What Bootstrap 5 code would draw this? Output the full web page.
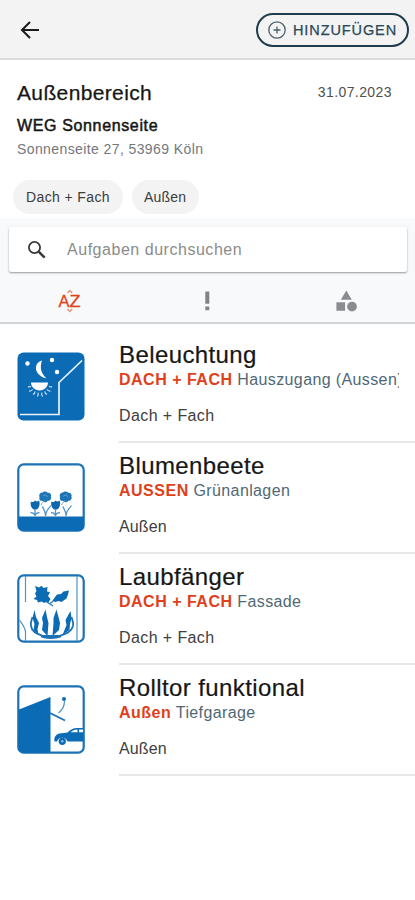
<!DOCTYPE html>
<html lang="de">
<head>
<meta charset="utf-8">
<meta name="viewport" content="width=device-width, initial-scale=1">
<title>Außenbereich</title>
<link href="https://cdn.jsdelivr.net/npm/bootstrap@5.3.0/dist/css/bootstrap.min.css" rel="stylesheet">
<style>
body{font-family:"Liberation Sans",Arial,sans-serif;background:#fff;color:#161616;min-height:900px}
svg{display:block;flex:none}
.topbar{height:60px;background:#f3f3f3;border-bottom:2px solid #dcdcdc;padding:1px 6px 0 18px}
.btn-add{height:34px;width:153px;border:2px solid #1d3c4c;color:#2b4858;font-size:14.5px;letter-spacing:.9px;-webkit-text-stroke:.25px;line-height:1;padding:1px 0 0 9px;gap:6px}
.info{height:158px;padding:20px 12px 0 13px}
.area-title{font-size:21px;letter-spacing:.36px;line-height:26px;-webkit-text-stroke:.25px}
.date{font-size:14px;letter-spacing:.42px;line-height:25px;color:#505050;margin-right:7px}
.weg{font-size:16px;letter-spacing:.64px;line-height:20px;-webkit-text-stroke:.5px;margin-top:10px}
.addr{font-size:14px;letter-spacing:.4px;line-height:18px;color:#74777c;margin-top:4px}
.chips{margin-top:22px;gap:9px}
.chip{height:34px;line-height:34px;background:#f3f3f3;font-size:14px;letter-spacing:.38px;color:#3c3c3c;padding:0 13px}
.chip+.chip{letter-spacing:.2px;padding-left:12px}
.tools{height:106px;background:#f8f9fb;border-bottom:2px solid #d3d4d6;padding-top:9px}
.searchbox{height:45px;margin:0 8px 0 9px;background:#fff;border-radius:2px;box-shadow:0 1px 2px rgba(0,0,0,.4);padding-left:18px;gap:20px}
.searchbox input{font-size:16px;letter-spacing:.53px;color:#333}
.searchbox input::placeholder{color:#8b8b8b;opacity:1}
.sorts{padding-top:17px}
.az{font-size:17px;fill:#e0431c;stroke:#e0431c;stroke-width:.3px}
.tasks{padding:8px 0 0 17px}
.task{height:111px;gap:34px}
.task svg{margin-top:20px}
.task-body{height:111px;border-bottom:2px solid #e8e8e8;padding-top:9px;min-width:0}
.task-name{font-size:24px;letter-spacing:.4px;line-height:28px;-webkit-text-stroke:.2px}
.task-place{font-size:16px;letter-spacing:.38px;line-height:20px;margin-top:1px;width:280px;color:#506875;overflow:hidden;white-space:nowrap}
.task-place b{color:#df3f1b;letter-spacing:.5px}
.task-tag{font-size:16px;letter-spacing:.4px;line-height:20px;margin-top:16px;color:#404040}
.task-tag.short{letter-spacing:.15px}
</style>
</head>
<body>
<header class="topbar d-flex align-items-center justify-content-between">
  <svg width="24" height="24" viewBox="0 0 24 24" fill="none" stroke="#1a1a1a" stroke-width="2"><path d="M21 12H4.500M12 4 4 12l8 8"/></svg>
  <button class="btn btn-add rounded-pill d-flex align-items-center">
    <svg width="20" height="20" viewBox="0 0 20 20" fill="none" stroke="#4b606d" stroke-width="1.300"><circle cx="10" cy="10" r="8.200"/><path d="M10 6.500v7M6.500 10h7"/></svg>
    <span>HINZUFÜGEN</span>
  </button>
</header>

<section class="info">
  <div class="px-1">
    <div class="d-flex justify-content-between">
      <h1 class="area-title m-0">Außenbereich</h1>
      <span class="date">31.07.2023</span>
    </div>
    <div class="weg">WEG Sonnenseite</div>
    <div class="addr">Sonnenseite 27, 53969 Köln</div>
  </div>
  <div class="chips d-flex">
    <span class="chip rounded-pill">Dach + Fach</span>
    <span class="chip rounded-pill">Außen</span>
  </div>
</section>

<section class="tools">
  <div class="searchbox d-flex align-items-center">
    <svg width="20" height="20" viewBox="0 0 20 20" fill="none" stroke="#3a3a3a"><circle cx="7.500" cy="7.500" r="5.600" stroke-width="1.800"/><path d="m11.700 11.700 6 6" stroke-width="2.500"/></svg>
    <input class="form-control border-0 shadow-none bg-transparent p-0" type="text" placeholder="Aufgaben durchsuchen">
  </div>
  <div class="sorts row g-0">
    <div class="col-4 d-flex justify-content-center"><svg width="26" height="24" viewBox="0 0 26 24"><g class="az"><text x="2.500" y="18" textLength="11" lengthAdjust="spacingAndGlyphs">A</text><text x="13.500" y="18" textLength="11" lengthAdjust="spacingAndGlyphs">Z</text></g><path d="m11.500 4 2.300-2.600L16.100 4M11.500 20l2.300 2.600 2.300-2.600" fill="none" stroke="#ea8a70" stroke-width="1.300"/></svg></div>
    <div class="col-4 d-flex justify-content-center"><svg width="24" height="24" viewBox="0 0 24 24" fill="#828385"><path d="M10.300 2.500h4v12.300h-4zM10.300 17.500h4v3.700h-4z"/></svg></div>
    <div class="col-4 d-flex justify-content-center"><svg width="24" height="24" viewBox="0 0 24 24" fill="#8b8c90"><path d="m12.300 1.500 5.500 9.200h-11zM2.400 13.300h8.700v8.500H2.400z"/><circle cx="18" cy="17.600" r="4.900"/></svg></div>
  </div>
</section>

<main class="tasks">
  <article class="task d-flex">
    <svg width="68" height="69" viewBox="0 0 68 69"><rect x=".5" y=".5" width="67" height="68" rx="6" fill="#0b6cb5"/>
      <g fill="#fff"><path d="M25 8.500c-8 2-9.500 14 4.500 18-5.500-5-7-11-4.500-18z"/><path d="M14 30.500h17c0 4-3.500 8-8.500 8s-8.500-4-8.500-8z"/><circle cx="10.500" cy="11.500" r="2.200"/><circle cx="35" cy="8" r="2.200"/><circle cx="40" cy="20" r="2.200"/></g>
      <g stroke="#cfe1f2" fill="none" stroke-width="1.200"><path d="M11 34.500c1 .8 2 .5 3-.2M12 39c1.500.2 2.800-.4 3.600-1.500M16 42.500c1.300-.5 2-1.500 2-3M20.500 44.500c.7-1 .8-2.500.5-3.800M25.500 44.500c-.7-1-1-2.500-.7-3.800M30 42.500c-1.300-.5-2-1.500-2.300-3M33.500 39c-1.500.2-2.800-.4-3.600-1.500M35 34.500c-1 .8-2 .5-3-.2"/></g>
      <path d="M3 62.500h39V30.500L65 8.500" fill="none" stroke="#e8f2fa" stroke-width="1.700"/></svg>
    <div class="task-body flex-grow-1">
      <h2 class="task-name m-0">Beleuchtung</h2>
      <div class="task-place"><b>DACH + FACH</b> Hauszugang (Aussen)</div>
      <div class="task-tag">Dach + Fach</div>
    </div>
  </article>

  <article class="task d-flex">
    <svg width="68" height="69" viewBox="0 0 68 69"><rect x="1.300" y="1.300" width="65.400" height="66.400" rx="5.500" fill="#fff" stroke="#1b72b5" stroke-width="2.200"/>
      <path d="M1.500 53.500h65V62c0 3.500-2 5.500-5.500 5.500H7c-3.500 0-5.500-2-5.500-5.500z" fill="#0b6cb5"/>
      <g id="flowers"><path d="M14 38.500c1.500 1 2.500.6 4-1 1.500 1.300 2.500 1.300 4 0 1 1.500.8 5.500-.7 7.500s-4.800 2-6.300 0c-1.400-2-1.700-4.500-1-6.500z" fill="#0f68ab"/><path d="M18 46v7M13.500 49.500c2 0 3.500 1 4.500 2.600 1-1.600 2.500-2.600 4.500-2.600M28.500 53c0-6-2-6-3-9.500M28.500 53c.5-7 3.500-7 5.500-10.500" fill="none" stroke="#4f95c9" stroke-width="1.300"/><path d="M22.500 34c-1-2.500 1-4.500 3-4.500 1.500-1.800 4.500-1 5.200.3 2.700-.3 4 2 3.200 4 1 2-1 4.300-3.200 4-1.200 2-4 1.800-4.800.3-2.900.2-4.200-1.800-3.400-4.100z" fill="#1d75b8"/><path d="M26 33c2-2 4.500-.5 4 1.200M24 42c1-3 3-3 3.500-4.500" stroke="#6aa6d3" fill="none"/></g>
      <use href="#flowers" x="20.500"/></svg>
    <div class="task-body flex-grow-1">
      <h2 class="task-name m-0">Blumenbeete</h2>
      <div class="task-place"><b>AUSSEN</b> Grünanlagen</div>
      <div class="task-tag short">Außen</div>
    </div>
  </article>

  <article class="task d-flex">
    <svg width="68" height="69" viewBox="0 0 68 69"><rect x="1.300" y="1.300" width="65.400" height="66.400" rx="5.500" fill="#fff" stroke="#1b72b5" stroke-width="2.200"/>
      <path d="M8.500 2v26M8.500 67V58C8 53 5 50 2.500 46M60 2v65" fill="none" stroke="#4c94c9" stroke-width="1.200"/>
      <g fill="#0b6cb5"><path d="m18 12 4 1.500 2.500-1.800 2 2.300 4-1-.5 4.500 3 .5-2 4 2.500 3-2 3.500-2.500-.8-1.500 1.300-3-1.500-3.500 1-1-2.500-3.500-1 3-2.500-1.500-3 1.500-2.500z"/><path d="m35.500 26.500 4.500-6 4-.5 2.500-2.500 5.500-1-1 4-1.500 4-5 3.500-3-1-3.500 1z"/><path d="m17.500 36-2 8 2 6-1 6 5 5-1-6 1.500-6-3-6zM28.500 35.500l-3.500 8.500 1 5-1 7 5.500 6 1-13-1.500-6zM39.500 35.500l-3 8.500v5l-1 13 6.500-6 1-7-1.500-6zM53.500 37l-5 9 1 5-4 10 7-5 .5-6 1.500-6z"/></g>
      <path d="m29 27.500 7 4.500M36.500 27 32 30" stroke="#2b7bb9" stroke-width="1.400"/>
      <path d="M14 52c1 7 8 8 12 10h16c6-2 12-3 14-10M14 52c-1-4 1-6 1.500-9M56 52c1-4-1-6-1.500-9M24 62.500c5 2 14 2 20 0" fill="none" stroke="#1b72b5" stroke-width="1.800"/></svg>
    <div class="task-body flex-grow-1">
      <h2 class="task-name m-0">Laubfänger</h2>
      <div class="task-place"><b>DACH + FACH</b> Fassade</div>
      <div class="task-tag">Dach + Fach</div>
    </div>
  </article>

  <article class="task d-flex">
    <svg width="68" height="69" viewBox="0 0 68 69"><rect x="1.300" y="1.300" width="65.400" height="66.400" rx="5.500" fill="#fff" stroke="#1b72b5" stroke-width="2.200"/>
      <path d="M2 24.500 33.500 12v55.500H7c-3.500 0-5.500-2-5.500-5.500z" fill="#0b6cb5"/>
      <path d="m33 28 15 7.500" stroke="#1b72b5" stroke-width="1.900"/><path d="M47.500 16c0 5-2 9-6 12" fill="none" stroke="#4c94c9" stroke-width="1.200"/><circle cx="47" cy="14" r="2" fill="#0b6cb5"/>
      <path d="M66 56.500H50.500a5.500 5.500 0 0 0-10.500 0h-2.500c-.8-4 1-7 5-8l8-1c4-3.500 6-4.500 10-4.500H66z" fill="#0b6cb5"/><circle cx="45.300" cy="56.300" r="3.600" fill="#0b6cb5"/><circle cx="45.300" cy="56.300" r="1.200" fill="#8dbce0"/><path d="M53.500 47.300c2.500-2.200 4.500-2.800 7-2.800v2.800zM62 44.500h4v2.800h-4z" fill="#fff"/></svg>
    <div class="task-body flex-grow-1">
      <h2 class="task-name m-0">Rolltor funktional</h2>
      <div class="task-place"><b>Außen</b> Tiefgarage</div>
      <div class="task-tag short">Außen</div>
    </div>
  </article>
</main>
<script src="https://cdn.jsdelivr.net/npm/bootstrap@5.3.0/dist/js/bootstrap.bundle.min.js"></script>
</body>
</html>
